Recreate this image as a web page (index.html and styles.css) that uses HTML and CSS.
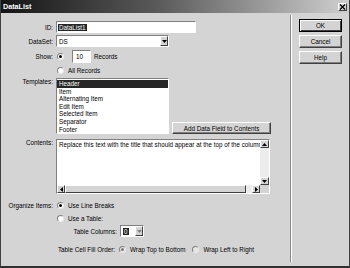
FILE: index.html
```html
<!DOCTYPE html>
<html lang="en">
<head>
  <meta charset="UTF-8">
  <title>DataList</title>
  <link rel="stylesheet" href="styles.css">
</head>
<body>

  <div class="dialog">
    <div class="titlebar">
      <span class="title">DataList</span>
      <span class="close">
        <svg width="7" height="6" viewBox="0 0 7 6"><path d="M1 0.5 L6 5.5 M6 0.5 L1 5.5" stroke="#000" stroke-width="1.3"/></svg>
      </span>
    </div>

    <div class="main">
      <div class="form">

        <div class="row r-id">
          <span class="lbl">ID:</span>
          <div class="field id-field"><span class="picked">DataList1</span></div>
        </div>

        <div class="row r-ds">
          <span class="lbl">DataSet:</span>
          <div class="field select ds-select">
            <span class="val">DS</span>
            <span class="drop"><svg width="5" height="3" viewBox="0 0 5 3"><polygon points="0,0 5,0 2.5,3" fill="#000"/></svg></span>
          </div>
        </div>

        <div class="row r-show">
          <span class="lbl">Show:</span>
          <span class="radio on"></span>
          <div class="field num">10</div>
          <span class="txt">Records</span>
        </div>

        <div class="row r-all">
          <span class="lbl"></span>
          <span class="radio"></span>
          <span class="txt">All Records</span>
        </div>

        <div class="row r-tpl">
          <span class="lbl top">Templates:</span>
          <ul class="listbox">
            <li class="picked">Header</li>
            <li>Item</li>
            <li>Alternating Item</li>
            <li>Edit Item</li>
            <li>Selected Item</li>
            <li>Separator</li>
            <li>Footer</li>
          </ul>
          <button class="btn add-btn">Add Data Field to Contents</button>
        </div>

        <div class="row r-contents">
          <span class="lbl top">Contents:</span>
          <div class="textarea">
            <div class="ta-text">Replace this text with the title that should appear at the top of the column</div>
            <div class="vscroll">
              <span class="arrow"><svg width="5" height="3" viewBox="0 0 5 3"><polygon points="2.5,0 5,3 0,3" fill="#000"/></svg></span>
              <span class="track"></span>
              <span class="arrow"><svg width="5" height="3" viewBox="0 0 5 3"><polygon points="0,0 5,0 2.5,3" fill="#000"/></svg></span>
            </div>
            <div class="hscroll">
              <span class="arrow"><svg width="3" height="5" viewBox="0 0 3 5"><polygon points="3,0 3,5 0,2.5" fill="#000"/></svg></span>
              <span class="thumb"></span>
              <span class="arrow"><svg width="3" height="5" viewBox="0 0 3 5"><polygon points="0,0 3,2.5 0,5" fill="#000"/></svg></span>
            </div>
            <div class="corner"></div>
          </div>
        </div>

        <div class="row r-org">
          <span class="lbl">Organize Items:</span>
          <span class="radio on"></span>
          <span class="txt">Use Line Breaks</span>
        </div>

        <div class="row r-table">
          <span class="lbl"></span>
          <span class="radio"></span>
          <span class="txt">Use a Table:</span>
        </div>

        <div class="row r-cols">
          <span class="lbl wide">Table Columns:</span>
          <div class="field select cols-select">
            <span class="val"><span class="picked">0</span></span>
            <span class="drop dim"><svg width="5" height="3" viewBox="0 0 5 3"><polygon points="0,0 5,0 2.5,3" fill="#808080"/></svg></span>
          </div>
        </div>

        <div class="row r-fill">
          <span class="lbl fill">Table Cell Fill Order:</span>
          <span class="radio on dim"></span>
          <span class="txt">Wrap Top to Bottom</span>
          <span class="radio dim gap"></span>
          <span class="txt">Wrap Left to Right</span>
        </div>

      </div>

      <div class="buttons">
        <button class="btn default">OK</button>
        <button class="btn">Cancel</button>
        <button class="btn">Help</button>
      </div>
    </div>
  </div>

</body>
</html>
```

FILE: styles.css
```css
:root {
  --face: #d4d4d4;
  --shadow: #808080;
  --dark: #404040;
  --light: #ffffff;
  --picked: #262626;
}

body {
  margin: 0;
  font-family: 'Liberation Sans', Arial, sans-serif;
  font-size: 6.3px;
  color: #000;
  background: var(--face);
}

.dialog {
  width: 350px;
  height: 268px;
  box-sizing: border-box;
  display: flex;
  flex-direction: column;
  background: var(--face);
  border-left: 1px solid var(--dark);
  border-right: 1px solid var(--dark);
  border-bottom: 2px solid #303030;
}

/* Title bar */
.titlebar {
  height: 13px;
  flex-shrink: 0;
  display: flex;
  align-items: center;
  justify-content: space-between;
  padding: 0 2px 0 2px;
  background: linear-gradient(to right, #151515, #5a5a5a 45%, #cfcfcf);
}

.title {
  color: #fff;
  font-weight: bold;
  font-size: 7.2px;
}

.close {
  width: 9px;
  height: 8px;
  box-sizing: border-box;
  display: flex;
  align-items: center;
  justify-content: center;
  background: var(--face);
  border: 1px solid;
  border-color: var(--light) var(--dark) var(--dark) var(--light);
}

.main {
  flex: 1;
  display: flex;
}

/* Left side form */
.form {
  width: 289px;
  margin: 2px 0 4px 0;
  padding-top: 6px;
  border-right: 1px solid #8a8a8a;
  box-shadow: 1px 0 0 var(--light);
}

.row {
  display: flex;
  align-items: center;
}

.lbl {
  width: 55px;
  flex-shrink: 0;
  box-sizing: border-box;
  padding-right: 3px;
  text-align: right;
  white-space: nowrap;
}

.lbl.top {
  align-self: flex-start;
  line-height: 8px;
}

.lbl.wide { width: 119px; }
.lbl.fill { width: 117px; }

.txt { white-space: nowrap; }

.r-id { height: 12px; }
.r-ds { height: 12px; margin-top: 2px; }
.r-show { height: 13px; margin-top: 3px; }
.r-all { height: 10px; margin-top: 2px; }
.r-tpl { height: 56px; margin-top: 3px; align-items: stretch; }
.r-contents { height: 55px; margin-top: 5px; align-items: stretch; }
.r-org { height: 10px; margin-top: 6px; }
.r-table { height: 10px; margin-top: 3px; }
.r-cols { height: 12px; margin-top: 2px; }
.r-fill { height: 10px; margin-top: 7px; }

/* Sunken fields */
.field {
  box-sizing: border-box;
  height: 100%;
  background: #fff;
  border: 1px solid;
  border-color: var(--shadow) var(--light) var(--light) var(--shadow);
  display: flex;
  align-items: center;
  padding-left: 1px;
  white-space: nowrap;
}

.id-field { width: 140px; }

.picked {
  background: var(--picked);
  color: #fff;
  padding: 0 1px;
}

.select { padding-right: 0; justify-content: space-between; }
.ds-select { width: 113px; }
.cols-select { width: 24px; }

.select .val { padding-left: 1px; }

.drop {
  width: 8px;
  height: 100%;
  box-sizing: border-box;
  display: flex;
  align-items: center;
  justify-content: center;
  background: var(--face);
  border: 1px solid;
  border-color: var(--light) var(--dark) var(--dark) var(--light);
}

.num {
  width: 19px;
  height: 13px;
  margin: 0 3px 0 4px;
  padding-left: 3px;
}

/* Radio buttons */
.radio {
  width: 7px;
  height: 7px;
  box-sizing: border-box;
  flex-shrink: 0;
  margin: 0 4px 0 1px;
  border-radius: 50%;
  background: #fff;
  border: 1px solid;
  border-color: var(--shadow) #e8e8e8 #e8e8e8 var(--shadow);
  display: flex;
  align-items: center;
  justify-content: center;
}

.radio.on::after {
  content: "";
  width: 3px;
  height: 3px;
  border-radius: 50%;
  background: #000;
}

.radio.dim { background: #e6e6e6; }
.radio.dim.on::after { background: #7a7a7a; }
.radio.gap { margin-left: 7px; }

/* Templates list */
.listbox {
  width: 113px;
  margin: 0;
  padding: 1px 0 0 0;
  list-style: none;
  box-sizing: border-box;
  background: #fff;
  border: 1px solid;
  border-color: var(--shadow) var(--light) var(--light) var(--shadow);
}

.listbox li {
  height: 7.6px;
  line-height: 7.6px;
  padding-left: 2px;
  white-space: nowrap;
}

/* Buttons */
.btn {
  font-family: inherit;
  font-size: 6.3px;
  color: #000;
  background: var(--face);
  box-sizing: border-box;
  border: 1px solid;
  border-color: var(--light) var(--dark) var(--dark) var(--light);
  box-shadow: inset -1px -1px 0 var(--shadow);
  padding: 0;
  height: 13px;
  cursor: pointer;
}

.add-btn {
  align-self: flex-end;
  width: 99px;
  height: 12px;
  margin-left: 3px;
}

.buttons {
  display: flex;
  flex-direction: column;
  gap: 3px;
  padding: 6px 0 0 8px;
}

.buttons .btn { width: 43px; }

.btn.default {
  border: 1px solid #000;
  box-shadow: inset 1px 1px 0 var(--light), inset -1px -1px 0 var(--dark);
}

/* Contents text area */
.textarea {
  width: 214px;
  box-sizing: border-box;
  display: grid;
  grid-template-columns: 1fr 9px;
  grid-template-rows: 1fr 8px;
  background: #fff;
  border: 1px solid;
  border-color: var(--shadow) var(--light) var(--light) var(--shadow);
}

.ta-text {
  white-space: nowrap;
  overflow: hidden;
  padding: 1px 0 0 2px;
}

.vscroll {
  display: flex;
  flex-direction: column;
  background: #ececec;
}

.hscroll {
  display: flex;
  background: #ececec;
}

.arrow {
  width: 9px;
  height: 8px;
  flex-shrink: 0;
  box-sizing: border-box;
  display: flex;
  align-items: center;
  justify-content: center;
  background: var(--face);
  border: 1px solid;
  border-color: var(--light) var(--dark) var(--dark) var(--light);
}

.hscroll .arrow { width: 8px; }

.track { flex: 1; }

.thumb {
  flex: 1;
  margin-right: 6px;
  background: var(--face);
  border: 1px solid;
  border-color: var(--light) var(--dark) var(--dark) var(--light);
}

.corner { background: var(--face); }
```
